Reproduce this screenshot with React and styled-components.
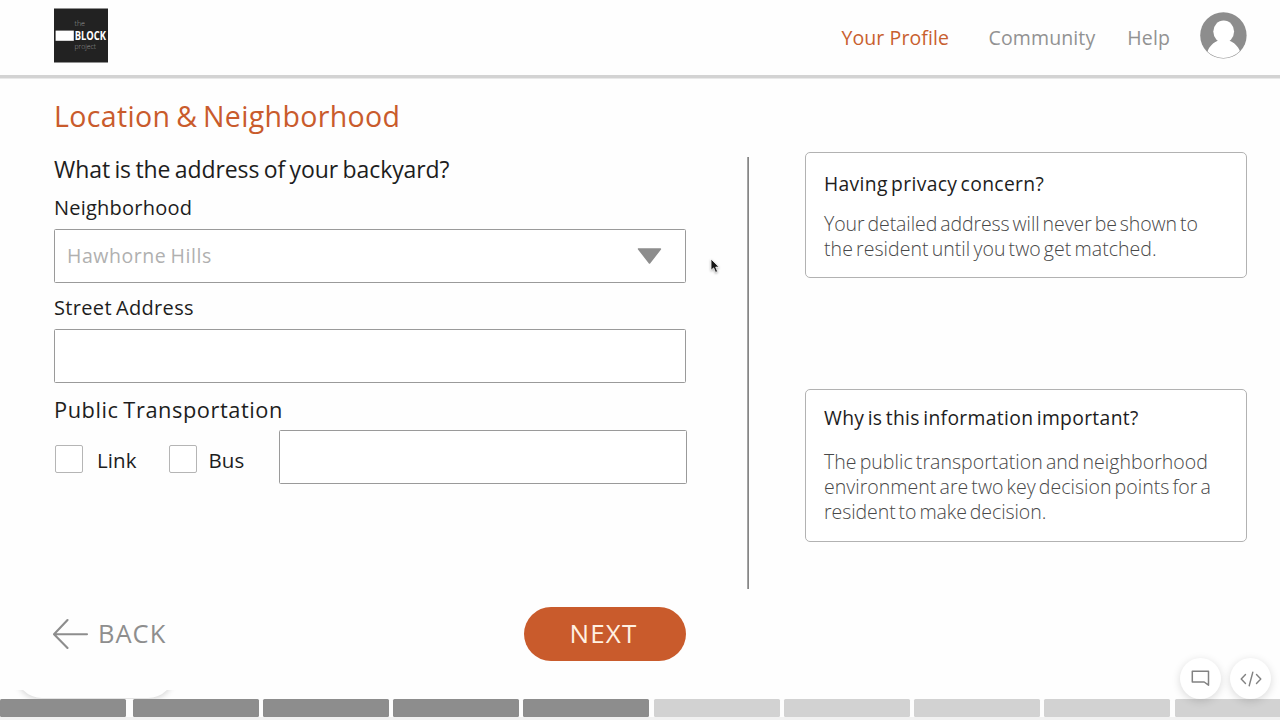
import React from "react";
import styled, { createGlobalStyle } from "styled-components";

const GlobalStyle = createGlobalStyle`
  * { box-sizing: border-box; }
  body {
    margin: 0;
    background: #fefefe;
    font-family: "Open Sans", "Noto Sans", sans-serif;
    color: #1d1d1d;
  }
`;

const Page = styled.div`
  position: relative;
  display: flex;
  flex-direction: column;
  width: 1280px;
  height: 720px;
  overflow: hidden;
`;

const Header = styled.header`
  display: flex;
  justify-content: space-between;
  height: 78px;
  flex: none;
  padding: 8px 33px 0 54px;
  border-bottom: 3px solid #d3d3d3;
`;

const Nav = styled.nav`
  display: flex;
  align-items: flex-start;
  padding-top: 4px;
`;

const NavLink = styled.a`
  margin-right: ${(p) => p.$gap}px;
  line-height: 51px;
  font-size: 19.5px;
  letter-spacing: ${(p) => (p.$active ? 0.1 : 0.12)}px;
  font-weight: ${(p) => (p.$active ? 500 : 400)};
  color: ${(p) => (p.$active ? "#c8602f" : "#929292")};
`;

const Main = styled.main`
  display: flex;
  height: 621px;
  flex: none;
  box-shadow: inset 0 1px 0 #e9e9e9;
`;

const FormColumn = styled.section`
  width: 633px;
  margin-left: 54px;
  display: flex;
  flex-direction: column;
`;

const Title = styled.h1`
  margin: 18px 0 0;
  font-size: 28.5px;
  line-height: 40px;
  font-weight: 400;
  letter-spacing: 0.36px;
  word-spacing: -2px;
  color: #c95b2c;
`;

const Question = styled.h2`
  margin: 18px 0 0;
  font-size: 23px;
  line-height: 30px;
  font-weight: 400;
  letter-spacing: -0.08px;
  word-spacing: -1.5px;
  white-space: nowrap;
`;

const Label = styled.label`
  margin-top: ${(p) => p.$top}px;
  font-size: ${(p) => p.$size || 20}px;
  line-height: 26px;
  letter-spacing: ${(p) => p.$track}px;
  word-spacing: -1.5px;
`;

const Field = styled.div`
  display: flex;
  align-items: center;
  justify-content: space-between;
  width: ${(p) => p.$width || 632}px;
  height: 54px;
  margin-top: ${(p) => p.$top || 0}px;
  padding: 0 23px 0 12px;
  border: 1px solid #9a9a9a;
  border-radius: 1.5px;
  background: #fff;
`;

const Placeholder = styled.span`
  font-size: 19.5px;
  line-height: 26px;
  letter-spacing: 0.56px;
  word-spacing: -1.5px;
  color: #b0b0b0;
`;

const TransitRow = styled.div`
  display: flex;
  align-items: center;
  margin-top: 7px;
`;

const Option = styled.div`
  display: flex;
  align-items: center;
  width: ${(p) => p.$width}px;
  gap: ${(p) => p.$gap}px;
  padding-left: 1px;
  font-size: 20.5px;
  letter-spacing: 0.1px;
  line-height: 28px;
`;

const CheckBox = styled.span`
  width: 28px;
  height: 28px;
  margin-top: 4px;
  border: 1px solid #b5b5b5;
  border-radius: 2px;
  background: #fff;
`;

const OptionText = styled.span`
  margin-top: 5px;
`;

const Actions = styled.div`
  display: flex;
  justify-content: space-between;
  align-items: center;
  width: 632px;
  height: 54px;
  margin-top: 123px;
`;

const BackButton = styled.a`
  display: flex;
  align-items: center;
  gap: 10px;
  margin-left: -1px;
  font-size: 25.5px;
  line-height: 34px;
  letter-spacing: 1px;
  color: #8e8e8e;
`;

const BackText = styled.span`
  margin-bottom: 2px;
`;

const NextButton = styled.button`
  width: 162px;
  height: 54px;
  padding: 0 3px 2px 0;
  border: 0;
  border-radius: 27px;
  background: #c95b2c;
  color: #fff1e2;
  font-family: inherit;
  font-size: 26px;
  line-height: 34px;
  letter-spacing: 1.2px;
`;

const Divider = styled.div`
  width: 2px;
  height: 432px;
  margin: 79px 0 0 60px;
  flex: none;
  border-left: 1px solid #a4a4a4;
  background: #868686;
`;

const Aside = styled.aside`
  width: 442px;
  margin-left: 56px;
  padding-top: 74px;
`;

const Card = styled.article`
  height: ${(p) => p.$height}px;
  margin-bottom: 111px;
  padding: ${(p) => p.$pad}px 0 0 18px;
  border: 1.5px solid #b2b2b2;
  border-radius: 5px;
  background: #fff;
`;

const CardTitle = styled.h3`
  margin: 0 0 ${(p) => p.$gap}px;
  font-size: 19.3px;
  line-height: 26px;
  font-weight: 500;
  letter-spacing: 0.34px;
  word-spacing: -2px;
`;

const CardLine = styled.div`
  font-size: 19.5px;
  line-height: 25.3px;
  font-weight: 300;
  letter-spacing: ${(p) => p.$track}px;
  word-spacing: -2px;
  white-space: nowrap;
  color: #484848;
`;

const Progress = styled.footer`
  display: flex;
  gap: 4.25px;
  flex: none;
  height: 21px;
  padding-bottom: 3px;
  background: linear-gradient(#fdfdfd 18px, #f1f1f1 18px);
`;

const Segment = styled.div`
  flex: none;
  width: 126px;
  height: 18px;
  border-radius: 1.5px;
  background: ${(p) => (p.$done ? "#8d8d8d" : "#d2d2d2")};
  &:first-child { margin-right: 2.35px; }
`;

const CornerSheet = styled.div`
  position: absolute;
  left: 16px;
  top: 655px;
  width: 158px;
  height: 43px;
  border-radius: 0 0 26px 26px;
  background: #fefefe;
  box-shadow: 0 2px 6px rgba(0, 0, 0, 0.16);
  clip-path: inset(35px -5px -1px -5px);
`;

const FloatingTools = styled.div`
  position: absolute;
  right: 9px;
  top: 658px;
  display: flex;
  gap: 9px;
`;

const ToolButton = styled.span`
  display: flex;
  align-items: center;
  justify-content: center;
  width: 41px;
  height: 41px;
  border-radius: 50%;
  background: #fff;
  box-shadow: 0 2px 8px rgba(0, 0, 0, 0.15);
`;

const Cursor = styled.svg`
  position: absolute;
  left: 709px;
  top: 257px;
  filter: drop-shadow(0 1px 1px rgba(0, 0, 0, 0.3));
`;

function Logo() {
  return (
    <svg width="55" height="55" viewBox="0 0 55 55">
      <rect y="0.5" width="54" height="54" fill="#222" />
      <rect x="1.6" y="22.6" width="18.2" height="10.2" fill="#fff" />
      <g fontFamily="Open Sans, sans-serif">
        <text x="20.5" y="18.4" fontSize="7.8" fill="#999" textLength="10.5" lengthAdjust="spacingAndGlyphs" fontWeight="300">the</text>
        <text x="20.7" y="32.2" fontSize="13" fill="#fff" textLength="31.3" lengthAdjust="spacingAndGlyphs" fontWeight="700">BLOCK</text>
        <text x="20.5" y="41" fontSize="7.8" fill="#999" textLength="21.5" lengthAdjust="spacingAndGlyphs" fontWeight="300">project</text>
      </g>
    </svg>
  );
}

function Avatar() {
  return (
    <svg width="47" height="47" viewBox="0 0 47 47">
      <clipPath id="face"><circle cx="23.4" cy="23.4" r="22.6" /></clipPath>
      <circle cx="23.4" cy="23.4" r="23.2" fill="#8d8d8d" />
      <g clipPath="url(#face)" fill="#fff">
        <ellipse cx="23.7" cy="19.6" rx="10.4" ry="11" />
        <path d="M18.5 26V28.6C13.5 30.5 9.5 34 7.3 40L14 47H34L40.3 40C38 34 34 30.5 28.8 28.6V26Z" />
      </g>
    </svg>
  );
}

export default function App() {
  return (
    <Page>
      <GlobalStyle />
      <Header>
        <Logo />
        <Nav>
          <NavLink $active $gap={39.5}>Your Profile</NavLink>
          <NavLink $gap={32}>Community</NavLink>
          <NavLink $gap={30}>Help</NavLink>
          <Avatar />
        </Nav>
      </Header>

      <Main>
        <FormColumn>
          <Title>Location &amp; Neighborhood</Title>
          <Question>What is the address of your backyard?</Question>
          <Label $top={11} $track={0.22}>Neighborhood</Label>
          <Field $top={8}>
            <Placeholder>Hawhorne Hills</Placeholder>
            <svg width="25" height="16" viewBox="0 0 25 16">
              <path d="M1.6 1H23.4L12.5 15Z" fill="#8d8d8d" stroke="#8d8d8d" strokeWidth="1.6" strokeLinejoin="round" />
            </svg>
          </Field>
          <Label $top={12} $track={0.34}>Street Address</Label>
          <Field $top={8} />
          <Label $top={14} $size={21.8} $track={0.56}>Public Transportation</Label>
          <TransitRow>
            <Option $width={114} $gap={14}><CheckBox /><OptionText>Link</OptionText></Option>
            <Option $width={111} $gap={11.5}><CheckBox /><OptionText>Bus</OptionText></Option>
            <Field $width={408} />
          </TransitRow>
          <Actions>
            <BackButton>
              <svg width="35" height="32" viewBox="0 0 35 32">
                <path d="M14.5 2L1 16.2L14.5 30M1 16.2H34" fill="none" stroke="#8d8d8d" strokeWidth="2.1" strokeLinecap="round" strokeLinejoin="round" />
              </svg>
              <BackText>BACK</BackText>
            </BackButton>
            <NextButton>NEXT</NextButton>
          </Actions>
        </FormColumn>

        <Divider />

        <Aside>
          <Card $height={126} $pad={18}>
            <CardTitle $gap={14}>Having privacy concern?</CardTitle>
            <CardLine $track={-0.08}>Your detailed address will never be shown to</CardLine>
            <CardLine $track={0.05}>the resident until you two get matched.</CardLine>
          </Card>
          <Card $height={153} $pad={15}>
            <CardTitle $gap={17.5}>Why is this information important?</CardTitle>
            <CardLine $track={0.04}>The public transportation and neighborhood</CardLine>
            <CardLine $track={0.03}>environment are two key decision points for a</CardLine>
            <CardLine $track={-0.07}>resident to make decision.</CardLine>
          </Card>
        </Aside>
      </Main>

      <Progress>
        {Array.from({ length: 10 }, (_, i) => <Segment key={i} $done={i < 5} />)}
      </Progress>

      <CornerSheet />
      <FloatingTools>
        <ToolButton>
          <svg width="19" height="17" viewBox="0 0 19 17">
            <path d="M1.3 1.3H17.5V15.2L13.2 12H1.3Z" fill="none" stroke="#828282" strokeWidth="1.5" strokeLinejoin="round" />
          </svg>
        </ToolButton>
        <ToolButton>
          <svg width="22" height="16" viewBox="0 0 22 16">
            <path d="M5.5 3.5L1.2 8L5.5 12.5M16.5 3.5L20.8 8L16.5 12.5M12.8 1.2L9.2 14.8" fill="none" stroke="#828282" strokeWidth="1.4" strokeLinecap="round" strokeLinejoin="round" />
          </svg>
        </ToolButton>
      </FloatingTools>
      <Cursor width="12" height="18" viewBox="0 0 12 18">
        <path d="M2 2V13.3L4.6 10.9L6.5 15.4L8.6 14.5L6.7 10.1H10Z" fill="#161616" stroke="#fff" strokeWidth="0.8" />
      </Cursor>
    </Page>
  );
}
